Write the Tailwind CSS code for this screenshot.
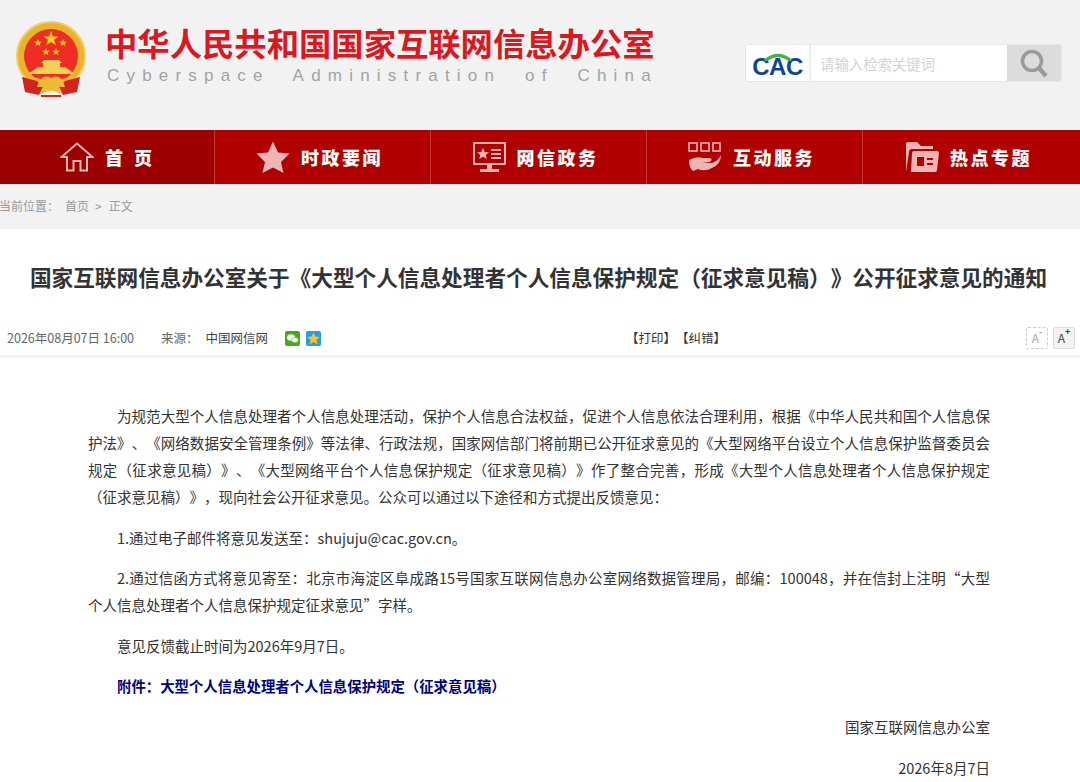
<!DOCTYPE html>
<html lang="zh-CN">
<head>
    <meta charset="UTF-8">
    <title>国家互联网信息办公室</title>
    <script src="https://cdn.jsdelivr.net/npm/@tailwindcss/browser@4"></script>
</head>
<body class="bg-white overflow-hidden [text-spacing-trim:space-all] font-['Liberation_Sans','Noto_Sans_CJK_SC',sans-serif]">
    <div class="w-[1080px] h-[782px] overflow-hidden">
        <!-- header -->
        <header class="h-[130px] bg-[#f2f2f2] flex justify-between pl-[15px] pr-[18px]">
            <div class="flex">
                <svg class="mt-[21px] w-[72px] h-[76px]" viewBox="0 0 72 76">
                    <circle cx="36" cy="35" r="34" fill="#eab32e"/>
                    <circle cx="36" cy="35" r="34" fill="none" stroke="#f3cd62" stroke-width="2"/>
                    <circle cx="36" cy="35" r="27" fill="#ee2e24"/>
                    <polygon fill="#f7d21e" points="36,10 38,15.5 43.5,15.5 39,18.8 40.8,24 36,21 31.2,24 33,18.8 28.5,15.5 34,15.5"/>
                    <polygon fill="#f7d21e" points="23,18 24,20.7 26.8,20.7 24.6,22.4 25.4,25 23,23.5 20.6,25 21.4,22.4 19.2,20.7 22,20.7"/>
                    <polygon fill="#f7d21e" points="48,18 49,20.7 51.8,20.7 49.6,22.4 50.4,25 48,23.5 45.6,25 46.4,22.4 44.2,20.7 47,20.7"/>
                    <polygon fill="#f7d21e" points="31,27 32,29.7 34.8,29.7 32.6,31.4 33.4,34 31,32.5 28.6,34 29.4,31.4 27.2,29.7 30,29.7"/>
                    <polygon fill="#f7d21e" points="41,27 42,29.7 44.8,29.7 42.6,31.4 43.4,34 41,32.5 38.6,34 39.4,31.4 37.2,29.7 40,29.7"/>
                    <path d="M29 39 H44 L47 42 H45 V46 H50 L60 53 H13 L23 46 H28 V42 H26 Z" fill="#f5cf57"/>
                    <path d="M13 54 Q36 64 60 54 L60 58 Q36 66 13 58 Z" fill="#eab32e"/>
                    <path d="M7 56 L22 60 L28 66 L24 74 L10 71 Z" fill="#d3231f"/>
                    <path d="M65 56 L50 60 L44 66 L48 74 L62 71 Z" fill="#d3231f"/>
                    <path d="M24 60 Q29 53 36 57 Q43 53 48 60 L50 66 L44 66 L47 73 L36 69 L25 73 L28 66 L22 66 Z" fill="#eebb36"/>
                    <path d="M26 74 H46 V76 H26 Z" fill="#d3231f"/>
                </svg>
                <div class="ml-[18px] pt-[21px]">
                    <div class="text-[32.35px] leading-[42px] font-bold text-[#d9181f] whitespace-nowrap font-['Noto_Sans_CJK_SC',sans-serif]">中华人民共和国国家互联网信息办公室</div>
                    <div class="mt-[2px] text-[17px] leading-[21px] text-[#a3a3a3] tracking-[7.2px] whitespace-pre pl-[2px]">Cyberspace  Administration  of  China</div>
                </div>
            </div>
            <div class="mt-[44px] h-[38px] w-[317px] flex border border-[#e6e6e6] rounded-[3px] overflow-hidden">
                <div class="w-[65px] bg-white border-r-2 border-[#eeeeee] relative flex items-center justify-center">
                    <svg class="absolute left-[14px] top-[8px] w-[36px] h-[8px]" viewBox="0 0 36 8">
                        <path d="M5 8 Q18 -3 31 8" fill="none" stroke="#4ab048" stroke-width="3.4"/>
                    </svg>
                    <span class="mt-[8px] text-[24px] leading-none font-bold text-[#0f4493] tracking-[-0.5px]">CAC</span>
                </div>
                <div class="flex-1 bg-white pl-[9px] pt-[2px] flex items-center text-[14.4px] text-[#d4d4d4] font-['Noto_Sans_CJK_SC',sans-serif]">请输入检索关键词</div>
                <div class="w-[54px] bg-[#dcdcdc] flex items-center justify-center">
                    <svg class="w-[30px] h-[30px]" viewBox="0 0 30 30">
                        <circle cx="13" cy="13" r="9.5" fill="none" stroke="#9a9a9a" stroke-width="3.5"/>
                        <path d="M20 20 L27 28" stroke="#9a9a9a" stroke-width="4.5"/>
                    </svg>
                </div>
            </div>
        </header>

        <!-- nav -->
        <nav class="h-[54px] bg-[#b10000] grid grid-cols-[215px_216px_216px_216px_217px] text-white font-black text-[18px] font-['Noto_Sans_CJK_SC',sans-serif]">
            <a class="bg-[#9c0000] border-r border-[#c43a3a] flex items-center justify-center gap-[11px] pr-[2px]">
                <svg class="w-[34px] h-[30px]" viewBox="0 0 34 30" fill="none" stroke="#efb4b4" stroke-width="2">
                    <path d="M1.5 15 L17 1.5 L32.5 15 H27 V28.5 H20.5 V19 H13.5 V28.5 H7 V15 Z"/>
                </svg>
                <span class="whitespace-nowrap">首<span class="ml-[11px]">页</span></span>
            </a>
            <a class="border-r border-[#c43a3a] flex items-center justify-center gap-[11px] pr-[6px]">
                <svg class="w-[34px] h-[33px]" viewBox="0 0 34 33"><path d="M17 0.5 L22 11.5 L33.5 12.5 L25 21 L27.5 32 L17 26.5 L6.5 32 L9 21 L0.5 12.5 L12 11.5 Z" fill="#efb4b4"/></svg>
                <span class="tracking-[2.5px]">时政要闻</span>
            </a>
            <a class="border-r border-[#c43a3a] flex items-center justify-center gap-[11px] pr-[6px]">
                <svg class="w-[33px] h-[30px]" viewBox="0 0 33 30" fill="#efb4b4">
                    <path fill-rule="evenodd" d="M1 0 H32 a1 1 0 0 1 1 1 V22 a1 1 0 0 1 -1 1 H1 a1 1 0 0 1 -1 -1 V1 a1 1 0 0 1 1 -1 Z M2 2 V21 H31 V2 Z"/>
                    <polygon points="10,6 11.8,10 16,10.3 12.8,13 13.8,17 10,14.8 6.2,17 7.2,13 4,10.3 8.2,10"/>
                    <rect x="18" y="7" width="10" height="2"/><rect x="18" y="11" width="10" height="2"/><rect x="18" y="15" width="10" height="2"/>
                    <rect x="14" y="23" width="5" height="4"/><rect x="7" y="27" width="19" height="3"/>
                </svg>
                <span class="tracking-[2.5px]">网信政务</span>
            </a>
            <a class="border-r border-[#c43a3a] flex items-center justify-center gap-[11px] pr-[6px]">
                <svg class="w-[34px] h-[30px]" viewBox="0 0 34 30">
                    <g fill="none" stroke="#efb4b4" stroke-width="1.6"><rect x="1" y="1" width="8" height="8"/><rect x="13" y="1" width="8" height="8"/><rect x="25" y="1" width="7" height="8"/></g>
                    <path d="M1 18 Q8 14 15 16 L22 16 Q25 17 22 20 L14 21 L24 21 Q30 19 33 13 Q33 22 24 26 Q17 30 10 27 L5 29 Q1 26 1 18 Z" fill="#efb4b4"/>
                </svg>
                <span class="tracking-[2.5px]">互动服务</span>
            </a>
            <a class="flex items-center justify-center gap-[11px] pr-[5px]">
                <svg class="w-[33px] h-[30px]" viewBox="0 0 33 30">
                    <path d="M0 30 V2 a2 2 0 0 1 2 -2 H11 L15 4 H27 V7 H6 Q3 7 3 10 Z" fill="#efb4b4"/>
                    <path fill-rule="evenodd" d="M5 30 L6 11 Q6 9 8 9 H31 Q33 9 33 11 L31 28 Q31 30 29 30 Z M11 15 V24 H18 V15 Z M21 16 V18 H27 V16 Z M21 21 V23 H27 V21 Z" fill="#efb4b4"/>
                </svg>
                <span class="tracking-[2.5px]">热点专题</span>
            </a>
        </nav>

        <!-- breadcrumb -->
        <div class="h-[45px] bg-[#f2f2f2] flex items-center text-[12px] text-[#999999] pb-[1px] font-['Noto_Sans_CJK_SC',sans-serif]">
            <span class="-ml-[1px]">当前位置：</span>
            <span class="ml-[6px]">首页</span>
            <span class="ml-[6px]">&gt;</span>
            <span class="ml-[7px]">正文</span>
        </div>

        <!-- article title -->
        <h1 class="mt-[28px] h-[40px] pr-[3px] text-center text-[21.65px] leading-[40px] font-bold text-[#333333] whitespace-nowrap font-['Noto_Sans_CJK_SC',sans-serif]">国家互联网信息办公室关于《大型个人信息处理者个人信息保护规定（征求意见稿）》公开征求意见的通知</h1>

        <!-- meta -->
        <div class="mt-[21px] h-[40px] border-b-[3px] border-[#f2f2f2] flex items-center justify-between pl-[7px] pr-[5px] pt-[4px] text-[12.5px] text-[#666666] font-['Noto_Sans_CJK_SC',sans-serif]">
            <div class="w-[330px] flex items-center">
                <span class="whitespace-pre">2026年08月07日 16:00</span>
                <span class="ml-[27px]">来源：</span>
                <span class="ml-[7px] text-[#444444]">中国网信网</span>
                <svg class="ml-[17px] w-[15px] h-[15px]" viewBox="0 0 15 15">
                    <rect width="15" height="15" rx="2" fill="#46a91e"/>
                    <ellipse cx="6" cy="6.5" rx="4" ry="3.2" fill="#fff"/><ellipse cx="10" cy="9" rx="3.4" ry="2.7" fill="#fff" stroke="#46a91e" stroke-width=".6"/>
                </svg>
                <svg class="ml-[6px] w-[15px] h-[15px]" viewBox="0 0 15 15">
                    <rect width="15" height="15" rx="2" fill="#2d9be0"/>
                    <polygon points="7.5,1.5 9.3,5.6 13.7,6 10.4,9 11.4,13.3 7.5,11 3.6,13.3 4.6,9 1.3,6 5.7,5.6" fill="#f7c51e"/>
                </svg>
            </div>
            <div class="flex-1 pl-[289px] text-[#333333] whitespace-nowrap">【打印】【纠错】</div>
            <div class="flex gap-[5px] -mt-[2px]">
                <span class="w-[22px] h-[22px] border border-dashed border-[#cccccc] rounded-[2px] flex items-center justify-center text-[12px] text-[#aaaaaa] leading-none">A<sup class="text-[9px] font-bold -mt-[3px]">-</sup></span>
                <span class="w-[22px] h-[22px] border border-[#dddddd] bg-[#f2f2f2] rounded-[2px] flex items-center justify-center text-[12px] text-[#444444] leading-none">A<sup class="text-[9px] font-bold -mt-[3px]">+</sup></span>
            </div>
        </div>

        <!-- body -->
        <article class="mt-[44px] w-[902px] ml-[88px] text-[14.5px] leading-[27px] text-[#333333] text-justify font-['Noto_Sans_CJK_SC',sans-serif] flex flex-col gap-[13.6px]">
            <p class="indent-[29px]">为规范大型个人信息处理者个人信息处理活动，保护个人信息合法权益，促进个人信息依法合理利用，根据《中华人民共和国个人信息保护法》、《网络数据安全管理条例》等法律、行政法规，国家网信部门将前期已公开征求意见的《大型网络平台设立个人信息保护监督委员会规定（征求意见稿）》、《大型网络平台个人信息保护规定（征求意见稿）》作了整合完善，形成《大型个人信息处理者个人信息保护规定（征求意见稿）》，现向社会公开征求意见。公众可以通过以下途径和方式提出反馈意见：</p>
            <p class="indent-[29px]">1.通过电子邮件将意见发送至：shujuju@cac.gov.cn。</p>
            <p class="indent-[29px]">2.通过信函方式将意见寄至：北京市海淀区阜成路15号国家互联网信息办公室网络数据管理局，邮编：100048，并在信封上注明“大型个人信息处理者个人信息保护规定征求意见”字样。</p>
            <p class="indent-[29px]">意见反馈截止时间为2026年9月7日。</p>
            <p class="indent-[29px] font-bold text-[14.4px] text-[#000080]">附件：大型个人信息处理者个人信息保护规定（征求意见稿）</p>
            <p class="text-right">国家互联网信息办公室</p>
            <p class="text-right">2026年8月7日</p>
        </article>
    </div>
</body>
</html>
